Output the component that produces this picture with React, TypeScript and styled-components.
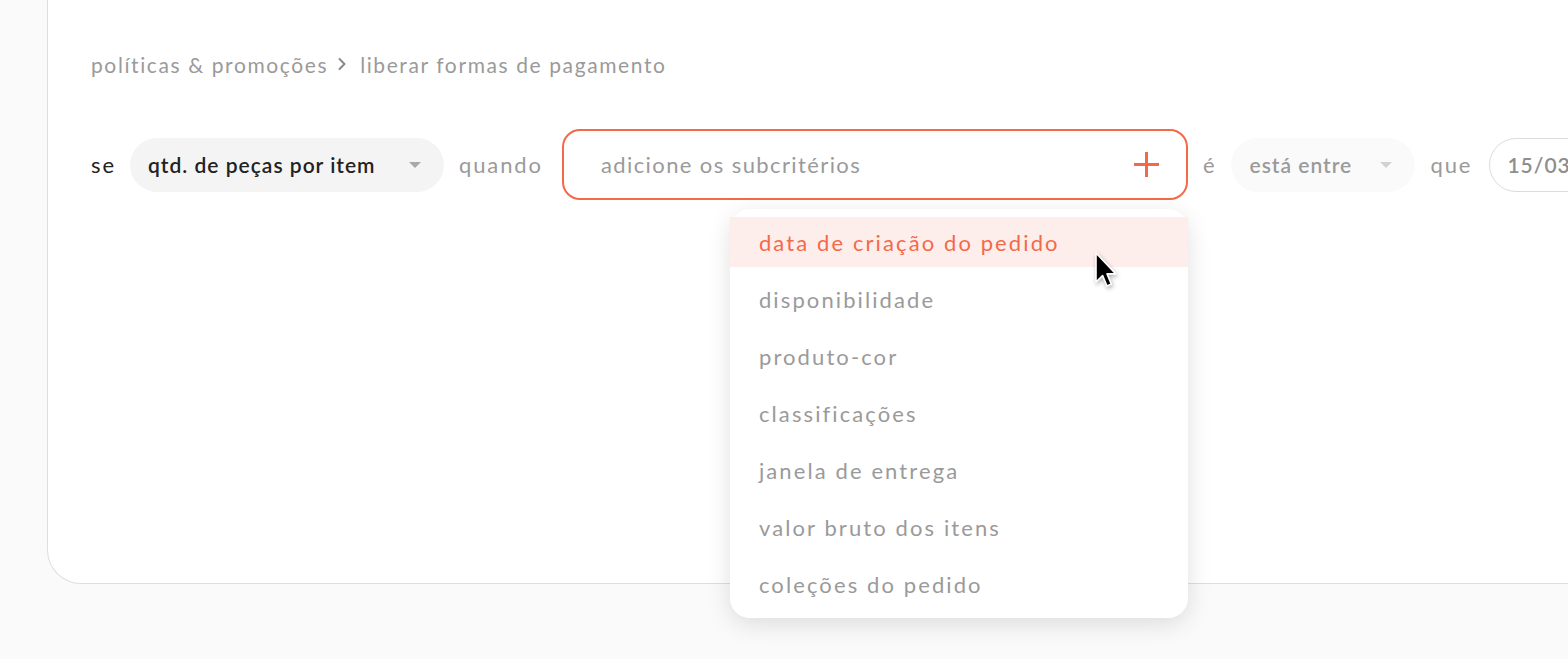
import React from 'react'
import styled, { createGlobalStyle } from 'styled-components'

const ORANGE = '#f4694a'
const GRAY = '#9a9a9a'

const GlobalStyle = createGlobalStyle`
  html, body {
    margin: 0;
    padding: 0;
    background: #fafafa;
    overflow: hidden;
  }
  body {
    font-family: 'Lato', 'Noto Sans', sans-serif;
  }
`

const Page = styled.div`
  width: 1568px;
  height: 659px;
  padding-left: 47px;
  box-sizing: border-box;
  overflow: hidden;
`

const Card = styled.div`
  height: 584px;
  background: #fff;
  border: 1px solid #dedede;
  border-top: none;
  border-right: none;
  border-radius: 0 0 0 34px;
  box-sizing: border-box;
  padding: 50px 0 0 43px;
  white-space: nowrap;
`

const Breadcrumb = styled.div`
  display: flex;
  align-items: center;
  font-size: 21px;
  letter-spacing: 1.6px;
  color: ${GRAY};
  height: 28px;

  svg {
    margin: 0 13px 0 9px;
  }
`

const Row = styled.div`
  display: flex;
  align-items: center;
  margin-top: 51px;
  height: 71px;

  & > * {
    flex-shrink: 0;
  }
`

const Word = styled.span<{ $dark?: boolean; $gap: number }>`
  font-size: 22px;
  letter-spacing: 1.9px;
  color: ${(p) => (p.$dark ? '#222' : GRAY)};
  margin-right: ${(p) => p.$gap}px;
`

const Select = styled.div<{ $muted?: boolean; $width: number }>`
  display: flex;
  align-items: center;
  justify-content: space-between;
  box-sizing: border-box;
  width: ${(p) => p.$width}px;
  height: 54px;
  padding: 0 23px 0 18px;
  border-radius: 27px;
  background: ${(p) => (p.$muted ? '#fafafa' : '#f4f4f4')};
  color: ${(p) => (p.$muted ? GRAY : '#222')};
  font-size: 21px;
  font-weight: 600;
  letter-spacing: 1px;
  margin-right: 15px;
`

const Caret = styled.span<{ $muted?: boolean }>`
  width: 0;
  height: 0;
  border-left: 6px solid transparent;
  border-right: 6px solid transparent;
  border-top: 6px solid ${(p) => (p.$muted ? '#d2d2d2' : '#a8a8a8')};
`

const InputWrap = styled.div`
  position: relative;
  margin-right: 15px;
`

const Input = styled.div`
  display: flex;
  align-items: center;
  justify-content: space-between;
  box-sizing: border-box;
  width: 626px;
  height: 71px;
  border: 2px solid ${ORANGE};
  border-radius: 18px;
  padding: 0 27px 0 37px;
  font-size: 22px;
  letter-spacing: 1.4px;
  color: ${GRAY};
`

const DateField = styled.div`
  display: flex;
  align-items: center;
  box-sizing: border-box;
  width: 200px;
  height: 54px;
  border: 1px solid #dcdcdc;
  border-radius: 27px;
  padding-left: 17px;
  font-size: 21px;
  font-weight: 600;
  letter-spacing: 1px;
  color: #8e8e8e;
`

const Menu = styled.ul`
  position: absolute;
  top: calc(100% + 9px);
  right: 0;
  width: 458px;
  margin: 0;
  padding: 8px 0 9px;
  list-style: none;
  background: #fff;
  border-radius: 20px;
  box-shadow: 0 6px 24px rgba(0, 0, 0, 0.12);
  display: flex;
  flex-direction: column;
  gap: 7px;
  z-index: 2;
`

const MenuItem = styled.li<{ $active?: boolean }>`
  display: flex;
  align-items: center;
  height: 50px;
  padding-left: 29px;
  font-size: 22px;
  letter-spacing: 2.1px;
  color: ${(p) => (p.$active ? ORANGE : GRAY)};
  background: ${(p) => (p.$active ? '#fdeeeb' : 'transparent')};
`

const Pointer = styled.svg`
  position: absolute;
  left: 532px;
  top: 122px;
  width: 24px;
  height: 40px;
  z-index: 3;
  filter: drop-shadow(1px 2px 2px rgba(0, 0, 0, 0.3));
`

const subcriteria = [
  'data de criação do pedido',
  'disponibilidade',
  'produto-cor',
  'classificações',
  'janela de entrega',
  'valor bruto dos itens',
  'coleções do pedido'
]

function App() {
  return (
    <Page>
      <GlobalStyle />
      <Card>
        <Breadcrumb>
          <span>políticas &amp; promoções</span>
          <svg width='10' height='14' viewBox='0 0 10 14'>
            <path d='M2.5 2 L7.5 7 L2.5 12' fill='none' stroke='#8a8a8a' strokeWidth='2' strokeLinecap='round' strokeLinejoin='round' />
          </svg>
          <span>liberar formas de pagamento</span>
        </Breadcrumb>
        <Row>
          <Word $dark $gap={14}>se</Word>
          <Select $width={314}>
            qtd. de peças por item
            <Caret />
          </Select>
          <Word $gap={19}>quando</Word>
          <InputWrap>
            <Input>
              adicione os subcritérios
              <svg width='25' height='25' viewBox='0 0 25 25'>
                <path d='M12.5 0 V25 M0 12.5 H25' stroke={ORANGE} strokeWidth='3' />
              </svg>
            </Input>
            <Menu>
              {subcriteria.map((label, i) => (
                <MenuItem key={label} $active={i === 0}>
                  {label}
                </MenuItem>
              ))}
            </Menu>
            <Pointer viewBox='0 0 24 40'>
              <path
                d='M2 2 L2 31 L8.6 24.6 L13 35 L17.4 33.1 L13 22.9 L21.8 22.9 Z'
                fill='#000'
                stroke='#fff'
                strokeWidth='1.6'
                strokeLinejoin='round'
              />
            </Pointer>
          </InputWrap>
          <Word $gap={15}>é</Word>
          <Select $muted $width={184}>
            está entre
            <Caret $muted />
          </Select>
          <Word $gap={17}>que</Word>
          <DateField>15/03/2024</DateField>
        </Row>
      </Card>
    </Page>
  )
}

export default App
